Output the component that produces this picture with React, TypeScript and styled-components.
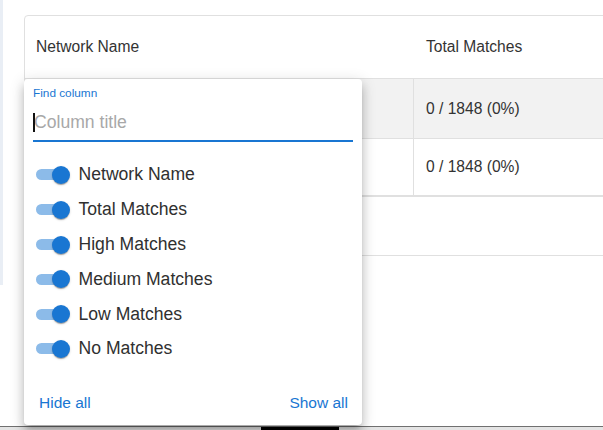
import React from "react";
import styled, { createGlobalStyle } from "styled-components";

const GlobalStyle = createGlobalStyle`
  html, body {
    margin: 0;
    padding: 0;
    background: #ffffff;
    overflow: hidden;
  }
  body {
    font-family: "Liberation Sans", Arial, sans-serif;
    color: #333333;
  }
  * {
    box-sizing: border-box;
  }
`;

const Page = styled.div`
  width: 603px;
  height: 430px;
  display: flex;
  flex-direction: column;
  overflow: hidden;
  position: relative;
`;

const Stage = styled.div`
  flex: 1;
  display: flex;
  align-items: flex-start;
  position: relative;
`;

const SideStrip = styled.div`
  width: 3px;
  height: 285px;
  background: #e9eef5;
  flex-shrink: 0;
`;

const Card = styled.div`
  margin: 15px 0 0 21px;
  width: 660px;
  flex-shrink: 0;
  border: 1px solid #e0e0e0;
  border-radius: 4px;
  background: #fff;
`;

// heights include the bottom border (border-box)
const Row = styled.div<{ $height: number; $shaded?: boolean; $thick?: boolean }>`
  display: grid;
  grid-template-columns: 389px 1fr;
  height: ${(p) => p.$height}px;
  background: ${(p) => (p.$shaded ? "#f2f2f2" : "transparent")};
  border-bottom: ${(p) => (p.$thick ? 2 : 1)}px solid #e0e0e0;
`;

const Cell = styled.div<{ $divider?: boolean }>`
  display: flex;
  align-items: center;
  padding-left: 12px;
  font-size: 15.6px;
  color: #333;
  border-right: ${(p) => (p.$divider ? "1px solid #e0e0e0" : "none")};
  &:first-child {
    padding-left: 11px;
  }
`;

const Footer = styled.div`
  height: 58px;
`;

const Panel = styled.div`
  position: absolute;
  left: 24px;
  top: 79px;
  width: 338px;
  height: 346px;
  background: #fff;
  border-radius: 4px;
  box-shadow: 0px 5px 5px -3px rgba(0, 0, 0, 0.2),
    0px 8px 10px 1px rgba(0, 0, 0, 0.14), 0px 3px 14px 2px rgba(0, 0, 0, 0.12);
  display: flex;
  flex-direction: column;
`;

const FindBox = styled.div`
  padding: 7px 9px 0 9px;
`;

const FindLabel = styled.div`
  font-size: 11.8px;
  line-height: 14px;
  color: #1976d2;
`;

const InputWrap = styled.div`
  position: relative;
  margin-top: 10px;
  padding-bottom: 6px;
  border-bottom: 2px solid #1976d2;
`;

const TitleInput = styled.input`
  display: block;
  width: 100%;
  height: 24px;
  border: none;
  outline: none;
  padding: 0 0 0 1px;
  margin: 0;
  font-family: "Liberation Sans", Arial, sans-serif;
  font-size: 17.6px;
  color: #333;
  background: transparent;
  &::placeholder {
    color: #a8a8a8;
  }
`;

const Caret = styled.span`
  position: absolute;
  left: 0;
  top: 3px;
  width: 1.5px;
  height: 19px;
  background: #111;
`;

const List = styled.div`
  margin-top: 15.6px;
`;

const ToggleRow = styled.div`
  height: 34.8px;
  display: flex;
  align-items: center;
  padding-left: 12px;
`;

const SwitchBox = styled.span`
  position: relative;
  width: 34px;
  height: 20px;
  flex-shrink: 0;
`;

const Track = styled.span<{ $on: boolean }>`
  position: absolute;
  left: 0;
  top: 4.5px;
  width: 30px;
  height: 11px;
  border-radius: 6px;
  background: ${(p) => (p.$on ? "#8cbbe9" : "#bdbdbd")};
`;

const Thumb = styled.span<{ $on: boolean }>`
  position: absolute;
  left: ${(p) => (p.$on ? 15.5 : 0)}px;
  top: 1px;
  width: 18px;
  height: 18px;
  border-radius: 50%;
  background: ${(p) => (p.$on ? "#1976d2" : "#fafafa")};
  box-shadow: 0px 2px 1px -1px rgba(0, 0, 0, 0.2),
    0px 1px 1px 0px rgba(0, 0, 0, 0.14), 0px 1px 3px 0px rgba(0, 0, 0, 0.12);
`;

const ToggleLabel = styled.span`
  margin-left: 8.5px;
  font-size: 17.6px;
  color: #303030;
`;

const Actions = styled.div`
  margin-top: auto;
  display: flex;
  justify-content: space-between;
  padding: 0 14px 13px 15px;
`;

const TextButton = styled.button`
  border: none;
  background: none;
  padding: 0;
  font-family: "Liberation Sans", Arial, sans-serif;
  font-size: 15.5px;
  line-height: 18px;
  color: #1976d2;
  cursor: pointer;
`;

const Taskbar = styled.div`
  height: 4px;
  flex-shrink: 0;
  border-top: 1px solid #707070;
  background: #e4e4e4;
  display: grid;
  grid-template-columns: 261px 78px 1fr;
`;

const TaskItem = styled.div<{ $active?: boolean }>`
  background: ${(p) => (p.$active ? "#000" : "transparent")};
`;

const columns = [
  "Network Name",
  "Total Matches",
  "High Matches",
  "Medium Matches",
  "Low Matches",
  "No Matches",
];

const rows = [
  { total: "0 / 1848 (0%)", height: 60, shaded: true },
  { total: "0 / 1848 (0%)", height: 58, shaded: false },
];

function Switch({ on }: { on: boolean }) {
  return (
    <SwitchBox>
      <Track $on={on} />
      <Thumb $on={on} />
    </SwitchBox>
  );
}

export default function App() {
  return (
    <>
      <GlobalStyle />
      <Page>
        <Stage>
          <SideStrip />
          <Card>
            <Row $height={63}>
              <Cell>Network Name</Cell>
              <Cell>Total Matches</Cell>
            </Row>
            {rows.map((r, i) => (
              <Row key={i} $height={r.height} $shaded={r.shaded} $thick={i === rows.length - 1}>
                <Cell $divider />
                <Cell>{r.total}</Cell>
              </Row>
            ))}
            <Footer />
          </Card>

          <Panel>
            <FindBox>
              <FindLabel>Find column</FindLabel>
              <InputWrap>
                <TitleInput placeholder="Column title" readOnly />
                <Caret />
              </InputWrap>
            </FindBox>
            <List>
              {columns.map((c) => (
                <ToggleRow key={c}>
                  <Switch on />
                  <ToggleLabel>{c}</ToggleLabel>
                </ToggleRow>
              ))}
            </List>
            <Actions>
              <TextButton>Hide all</TextButton>
              <TextButton>Show all</TextButton>
            </Actions>
          </Panel>
        </Stage>
        <Taskbar>
          <TaskItem />
          <TaskItem $active />
          <TaskItem />
        </Taskbar>
      </Page>
    </>
  );
}
